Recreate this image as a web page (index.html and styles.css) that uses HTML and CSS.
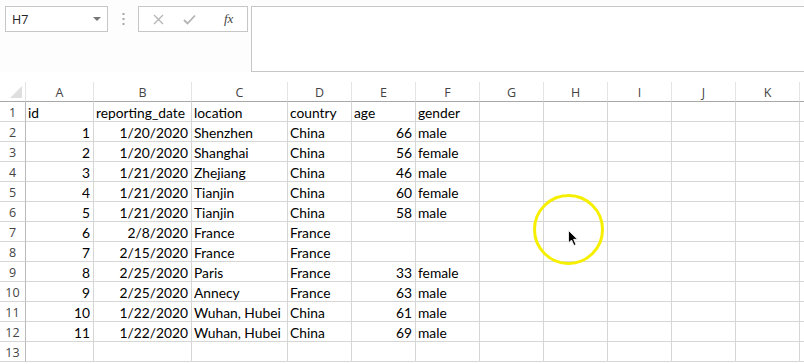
FILE: index.html
```html
<!DOCTYPE html>
<html lang="en">
<head>
    <meta charset="UTF-8">
    <title>Sheet1</title>
    <link rel="stylesheet" href="styles.css">
</head>
<body>
    <div class="formula-bar">
        <div class="name-box">
            <span>H7</span>
            <svg class="drop" width="8" height="4" viewBox="0 0 8 4"><path d="M0 0 H8 L4 4 Z" fill="#777"/></svg>
        </div>
        <div class="grip">
            <svg width="3" height="14" viewBox="0 0 3 14">
                <rect x="0.5" y="1" width="2" height="2" fill="#a6a6a6"/>
                <rect x="0.5" y="6" width="2" height="2" fill="#a6a6a6"/>
                <rect x="0.5" y="11" width="2" height="2" fill="#a6a6a6"/>
            </svg>
        </div>
        <div class="fx-buttons">
            <svg class="btn-icon" width="11" height="11" viewBox="0 0 11 11"><path d="M1 1 L10 10 M10 1 L1 10" stroke="#b3b3b3" stroke-width="1.3" fill="none"/></svg>
            <svg class="btn-icon" width="13" height="11" viewBox="0 0 13 11"><path d="M1 6 L4.5 9.5 L12 1.5" stroke="#b3b3b3" stroke-width="1.8" fill="none"/></svg>
            <span class="fx">fx</span>
        </div>
        <div class="formula-input"></div>
    </div>

    <div class="sheet" id="sheet"></div>

    <div class="click-ring">
        <svg class="pointer" width="10" height="17" viewBox="0 0 10 17">
            <path d="M0.5 0.5 V13 L3.5 10 L6 15.5 L8 14.6 L5.6 9.3 L9.5 9.3 Z" fill="#000" stroke="#fff" stroke-width="0.8"/>
        </svg>
    </div>

    <script>
        const colunas = ['A', 'B', 'C', 'D', 'E', 'F', 'G', 'H', 'I', 'J', 'K', ''];

        // [id, data, local, pais, idade, genero]
        const linhas = [
            ['id', 'reporting_date', 'location', 'country', 'age', 'gender'],
            [1, '1/20/2020', 'Shenzhen', 'China', 66, 'male'],
            [2, '1/20/2020', 'Shanghai', 'China', 56, 'female'],
            [3, '1/21/2020', 'Zhejiang', 'China', 46, 'male'],
            [4, '1/21/2020', 'Tianjin', 'China', 60, 'female'],
            [5, '1/21/2020', 'Tianjin', 'China', 58, 'male'],
            [6, '2/8/2020', 'France', 'France', '', ''],
            [7, '2/15/2020', 'France', 'France', '', ''],
            [8, '2/25/2020', 'Paris', 'France', 33, 'female'],
            [9, '2/25/2020', 'Annecy', 'France', 63, 'male'],
            [10, '1/22/2020', 'Wuhan, Hubei', 'China', 61, 'male'],
            [11, '1/22/2020', 'Wuhan, Hubei', 'China', 69, 'male'],
            []
        ];

        const sheet = document.getElementById('sheet');
        let html = '<div class="corner"><span class="corner-tri"></span></div>';
        colunas.forEach(c => { html += `<div class="col-head">${c}</div>`; });

        linhas.forEach((linha, i) => {
            html += `<div class="row-head">${i + 1}</div>`;
            colunas.forEach((c, j) => {
                const v = linha[j] === undefined ? '' : linha[j];
                const classe = (i > 0 && (j === 0 || j === 1 || j === 4)) ? 'cell num' : 'cell';
                html += `<div class="${classe}">${v}</div>`;
            });
        });
        sheet.innerHTML = html;
    </script>
</body>
</html>
```

FILE: styles.css
```css
body {
    margin: 0;
    background: #fff;
    font-family: Lato, "Open Sans", sans-serif;
    overflow: hidden;
}

/* barra de formula */
.formula-bar {
    display: flex;
    align-items: flex-start;
    padding: 6px 0 0 5px;
    height: 66px;
    background: #fdfdfd;
}

.name-box {
    box-sizing: border-box;
    width: 103px;
    height: 26px;
    border: 1px solid #c6c6c6;
    background: #fff;
    display: flex;
    align-items: center;
    justify-content: space-between;
    padding: 0 6px 0 6px;
    font-family: "Open Sans", sans-serif;
    font-size: 12.5px;
    color: #222;
}

.grip {
    width: 30px;
    height: 26px;
    display: flex;
    align-items: center;
    justify-content: center;
}

.fx-buttons {
    box-sizing: border-box;
    width: 110px;
    height: 26px;
    border: 1px solid #c6c6c6;
    background: #fff;
    display: flex;
    align-items: center;
    padding: 0 10px 0 14px;
    gap: 19px;
}

.fx {
    font-family: "Liberation Serif", serif;
    font-style: italic;
    font-size: 13px;
    color: #444;
    margin-left: 9px;
}

.formula-input {
    flex: 1;
    margin-left: 3px;
    box-sizing: border-box;
    height: 66px;
    border: 1px solid #c6c6c6;
    border-right: none;
    background: #fff;
}

/* grade da planilha */
.sheet {
    margin-top: 10px;
    display: grid;
    grid-template-columns: 26px 68px 98px 96px repeat(8, 64px) 1fr;
    grid-auto-rows: 20px;
    font-size: 13.8px;
    color: #000;
}

.cell, .col-head, .row-head, .corner {
    box-sizing: border-box;
    border-right: 1px solid #d6d6d6;
    border-bottom: 1px solid #d6d6d6;
    white-space: nowrap;
    overflow: hidden;
    line-height: 19px;
    padding-top: 1px;
}

.cell {
    padding-left: 2px;
    padding-right: 3px;
}

.cell.num {
    text-align: right;
}

.col-head {
    text-align: center;
    color: #444;
    font-family: "Open Sans", sans-serif;
    font-size: 12.5px;
    border-right-color: #e4e4e4;
    border-bottom-color: #a8a8a8;
}

.row-head {
    text-align: center;
    color: #444;
    font-family: "Open Sans", sans-serif;
    font-size: 12.5px;
    border-right-color: #b9b9b9;
}

.corner {
    position: relative;
    border-bottom-color: #a8a8a8;
    border-right-color: #e4e4e4;
}

.corner-tri {
    position: absolute;
    right: 3px;
    bottom: 3px;
    width: 0;
    height: 0;
    border-left: 12px solid transparent;
    border-bottom: 12px solid #dfdfdf;
}

/* marca do clique */
.click-ring {
    position: absolute;
    left: 533px;
    top: 194px;
    width: 71px;
    height: 71px;
    box-sizing: border-box;
    border: 3.5px solid #f6f000;
    border-radius: 50%;
}

.pointer {
    position: absolute;
    left: 32px;
    top: 33px;
}
```
